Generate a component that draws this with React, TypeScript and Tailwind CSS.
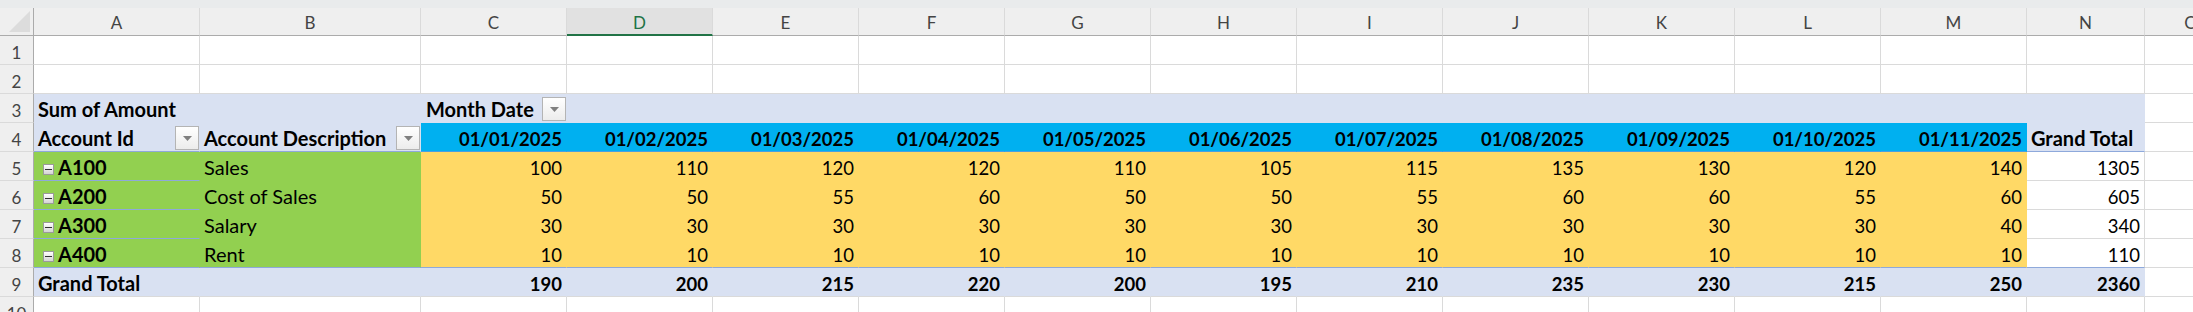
import type { ReactNode } from 'react'

const letters = ['A', 'B', 'C', 'D', 'E', 'F', 'G', 'H', 'I', 'J', 'K', 'L', 'M', 'N', 'O']

const dates = [
  '01/01/2025',
  '01/02/2025',
  '01/03/2025',
  '01/04/2025',
  '01/05/2025',
  '01/06/2025',
  '01/07/2025',
  '01/08/2025',
  '01/09/2025',
  '01/10/2025',
  '01/11/2025',
]

const accounts = [
  { id: 'A100', desc: 'Sales', values: [100, 110, 120, 120, 110, 105, 115, 135, 130, 120, 140], total: 1305 },
  { id: 'A200', desc: 'Cost of Sales', values: [50, 50, 55, 60, 50, 50, 55, 60, 60, 55, 60], total: 605 },
  { id: 'A300', desc: 'Salary', values: [30, 30, 30, 30, 30, 30, 30, 30, 30, 30, 40], total: 340 },
  { id: 'A400', desc: 'Rent', values: [10, 10, 10, 10, 10, 10, 10, 10, 10, 10, 10], total: 110 },
]

const totals = [190, 200, 215, 220, 200, 195, 210, 235, 230, 215, 250]

function Cell({ className = '', children }: { className?: string; children?: ReactNode }) {
  return (
    <div className={`flex h-[29px] items-end whitespace-nowrap border-b border-r pb-[3px] ${className}`}>
      {children}
    </div>
  )
}

function Blank() {
  return <Cell className="border-[#dadada] bg-white" />
}

function RowHead({ n }: { n: number }) {
  return (
    <div className="flex h-[29px] items-end justify-center border-b border-r border-b-[#dadada] border-r-[#ababab] bg-[#efefef] pb-[3px] text-[17px] text-[#444]">
      {n}
    </div>
  )
}

function FilterButton() {
  return (
    <span className="mb-[-2px] ml-auto flex h-[24px] w-[24px] shrink-0 items-center justify-center self-end border border-[#b4b4b4] bg-gradient-to-b from-white to-[#ececec]">
      <svg width="9" height="5" viewBox="0 0 9 5">
        <polygon points="0,0 9,0 4.5,5" fill="#7f7f7f" />
      </svg>
    </span>
  )
}

function Collapse() {
  return (
    <span className="mb-[2px] mr-[4px] flex h-[11px] w-[11px] shrink-0 items-center justify-center self-end border border-[#9a9a9a] bg-gradient-to-b from-white to-[#d4d4d4]">
      <span className="h-[1px] w-[7px] bg-[#333]" />
    </span>
  )
}

export default function App() {
  return (
    <div className="h-[312px] w-[2193px] overflow-hidden bg-white font-['Lato',sans-serif] text-[18.5px] leading-none text-black">
      <div className="h-[8px] bg-[#e9ebec]" />
      <div className="grid w-[2238px] grid-cols-[34px_166px_221px_repeat(11,146px)_118px_93px]">
        {/* column headers */}
        <div className="flex h-[28px] items-end justify-end border-b border-r border-b-[#ababab] border-r-[#ababab] bg-[#efefef] pb-[2px] pr-[2px]">
          <svg width="22" height="22" viewBox="0 0 22 22">
            <polygon points="21,0 21,21 0,21" fill="#dcdcdc" />
          </svg>
        </div>
        {letters.map((l) =>
          l === 'D' ? (
            <div
              key={l}
              className="flex h-[28px] items-center justify-center border-b-2 border-r border-b-[#217346] border-r-[#dadada] bg-[#e1e1e1] pt-[2px] text-[17px] text-[#217346]"
            >
              {l}
            </div>
          ) : (
            <div
              key={l}
              className="flex h-[28px] items-center justify-center border-b border-r border-b-[#ababab] border-r-[#dadada] bg-[#efefef] pt-[1px] text-[17px] text-[#444]"
            >
              {l}
            </div>
          ),
        )}

        {/* rows 1-2 */}
        {[1, 2].map((r) => [
          <RowHead key={`h${r}`} n={r} />,
          ...letters.map((l) => <Blank key={`${l}${r}`} />),
        ])}

        {/* row 3 */}
        <RowHead n={3} />
        <Cell className="border-[#d9e1f2] bg-[#d9e1f2] pl-[4px] text-[20px] font-bold">Sum of Amount</Cell>
        <Cell className="border-[#d9e1f2] bg-[#d9e1f2]" />
        <Cell className="border-[#d9e1f2] bg-[#d9e1f2] pl-[5px] text-[20px] font-bold">
          Month Date
          <FilterButton />
        </Cell>
        {dates.slice(1).map((d) => (
          <Cell key={`c3${d}`} className="border-[#d9e1f2] bg-[#d9e1f2]" />
        ))}
        <Cell className="border-[#d9e1f2] bg-[#d9e1f2]" />
        <Blank />

        {/* row 4 */}
        <RowHead n={4} />
        <Cell className="border-[#d9e1f2] border-b-[#8ea9db] bg-[#d9e1f2] pl-[4px] text-[20px] font-bold">
          Account Id
          <FilterButton />
        </Cell>
        <Cell className="border-[#d9e1f2] border-b-[#8ea9db] bg-[#d9e1f2] pl-[4px] text-[20px] font-bold">
          Account Description
          <FilterButton />
        </Cell>
        {dates.map((d) => (
          <Cell key={d} className="justify-end border-[#00b0f0] border-b-[#4a9fe0] bg-[#00b0f0] pr-[4px] font-bold">
            {d}
          </Cell>
        ))}
        <Cell className="border-[#d9e1f2] border-b-[#8ea9db] bg-[#d9e1f2] pl-[4px] text-[20px] font-bold">
          Grand Total
        </Cell>
        <Blank />

        {/* rows 5-8 */}
        {accounts.map((a, i) => {
          const last = i === accounts.length - 1
          return [
            <RowHead key={`h${a.id}`} n={5 + i} />,
            <Cell
              key={`a${a.id}`}
              className="border-[#92d050] border-b-[#8ea9db] bg-[#92d050] pl-[9px] text-[20px] font-bold"
            >
              <Collapse />
              {a.id}
            </Cell>,
            <Cell
              key={`b${a.id}`}
              className={`border-[#92d050] bg-[#92d050] pl-[4px] text-[20px] ${last ? 'border-b-[#8ea9db]' : ''}`}
            >
              {a.desc}
            </Cell>,
            ...a.values.map((v, j) => (
              <Cell
                key={`${a.id}${j}`}
                className={`justify-end border-[#ffd966] bg-[#ffd966] pr-[4px] ${last ? 'border-b-[#8ea9db]' : ''}`}
              >
                {v}
              </Cell>
            )),
            <Cell
              key={`n${a.id}`}
              className={`justify-end border-[#dadada] bg-white pr-[4px] ${last ? 'border-b-[#8ea9db]' : ''}`}
            >
              {a.total}
            </Cell>,
            <Blank key={`o${a.id}`} />,
          ]
        })}

        {/* row 9 */}
        <RowHead n={9} />
        <Cell className="border-[#d9e1f2] border-b-[#dadada] bg-[#d9e1f2] pl-[4px] text-[20px] font-bold">
          Grand Total
        </Cell>
        <Cell className="border-[#d9e1f2] border-b-[#dadada] bg-[#d9e1f2]" />
        {totals.map((t, j) => (
          <Cell
            key={`t${j}`}
            className="justify-end border-[#d9e1f2] border-b-[#dadada] bg-[#d9e1f2] pr-[4px] font-bold"
          >
            {t}
          </Cell>
        ))}
        <Cell className="justify-end border-[#d9e1f2] border-b-[#dadada] bg-[#d9e1f2] pr-[4px] font-bold">2360</Cell>
        <Blank />

        {/* row 10 */}
        <RowHead n={10} />
        {letters.map((l) => (
          <Blank key={`${l}10`} />
        ))}
      </div>
    </div>
  )
}
